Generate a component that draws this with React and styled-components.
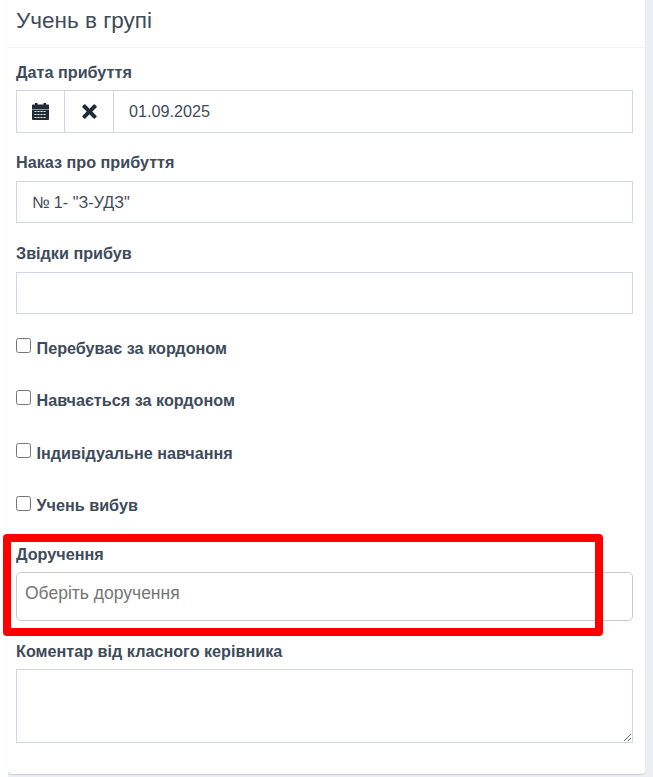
import React from "react";
import styled, { createGlobalStyle } from "styled-components";

const Global = createGlobalStyle`
  html, body { margin: 0; padding: 0; background: #fff; }
  body { font-family: "Liberation Sans", Arial, sans-serif; color: #3e4b5b; overflow: hidden; }
  * { box-sizing: border-box; }
`;

const Page = styled.div`
  position: relative;
  width: 653px;
  height: 777px;
  padding-left: 8px;
  overflow: hidden;
`;

const Shell = styled.div`
  height: 777px;
  background: #ebeff4;
  padding: 0 8px 3px 0;
`;

const Card = styled.section`
  height: 774px;
  background: #fff;
  border-radius: 0 0 4px 4px;
  box-shadow: 0 1px 1px rgba(60, 70, 90, 0.2);
`;

const CardHeader = styled.header`
  height: 48px;
  padding: 8px 8px 0;
  border-bottom: 1px solid #f2f3f5;
`;

const Title = styled.h2`
  margin: 0;
  font-size: 22.5px;
  line-height: 26px;
  font-weight: 400;
  color: #3e4b5b;
`;

const Body = styled.div`
  padding: 16px 12px 0 8px;
  display: flex;
  flex-direction: column;
`;

const Field = styled.div`
  margin-bottom: ${(p) => p.$mb ?? 22}px;
`;

const Label = styled.label`
  display: block;
  height: 26px;
  font-size: 16.2px;
  line-height: ${(p) => (p.$raised ? 14 : 16)}px;
  font-weight: 700;
  color: #3e4b5b;
`;

const InputGroup = styled.div`
  display: flex;
  height: 43px;
  border: 1px solid #d2d6e2;
`;

const Addon = styled.span`
  flex: none;
  width: ${(p) => p.$w}px;
  display: flex;
  align-items: center;
  justify-content: center;
  border-right: 1px solid #d2d6e2;
`;

const GroupInput = styled.input`
  flex: 1;
  min-width: 0;
  border: 0;
  outline: 0;
  padding: 0 15px;
  font: 400 16.2px "Liberation Sans", Arial, sans-serif;
  color: #3e4b5b;
  background: #fff;
`;

const TextInput = styled.input`
  display: block;
  width: 100%;
  height: 42px;
  border: 1px solid #d2d6e2;
  outline: 0;
  padding: 0 15px;
  font: 400 16.2px "Liberation Sans", Arial, sans-serif;
  color: #3e4b5b;
  background: #fff;
`;

const CheckRow = styled.label`
  display: flex;
  align-items: flex-start;
  height: ${(p) => p.$h}px;
  font-size: 16.2px;
  line-height: ${(p) => p.$lh}px;
  font-weight: 700;
  color: #3e4b5b;
`;

const Check = styled.input`
  flex: none;
  width: 15px;
  height: 15px;
  margin: 0 5.5px 0 0;
`;

const SelectBox = styled.input`
  display: block;
  width: 100%;
  height: 49px;
  border: 1px solid #cccccc;
  border-radius: 5px;
  outline: 0;
  padding: 0 8px 7px;
  font: 400 17.5px "Liberation Sans", Arial, sans-serif;
  background: #fff;
  &::placeholder { color: #757575; opacity: 1; }
`;

const Area = styled.textarea`
  display: block;
  width: 100%;
  height: 74px;
  border: 1px solid #d2d6e2;
  outline: 0;
  padding: 8px 15px;
  font: 400 16px "Liberation Sans", Arial, sans-serif;
  background: #fff;
`;

const Highlight = styled.div`
  position: absolute;
  left: 3px;
  top: 534px;
  width: 600px;
  height: 102px;
  border: 8px solid #ff0000;
  border-radius: 4px;
  pointer-events: none;
`;

const CalendarIcon = () => (
  <svg width="17" height="17" viewBox="0 0 17 17" fill="#212b36">
    <rect x="3" y="0" width="2.5" height="3" />
    <rect x="11.5" y="0" width="2.5" height="3" />
    <path d="M1 1.5h15a1 1 0 0 1 1 1V6H0V2.5a1 1 0 0 1 1-1z" />
    <path
      fillRule="evenodd"
      d="M0 6.5h17V16a1 1 0 0 1-1 1H1a1 1 0 0 1-1-1zM2.5 8v1h2V8zm3 0v1h2V8zm3 0v1h2V8zm3 0v1h2V8zM2.5 11v1h2v-1zm3 0v1h2v-1zm3 0v1h2v-1zm3 0v1h2v-1zM2.5 14v1h2v-1zm3 0v1h2v-1zm3 0v1h2v-1zm3 0v1h2v-1z"
    />
  </svg>
);

const CrossIcon = () => (
  <svg width="15" height="15" viewBox="0 0 16 16" fill="#212b36">
    <path d="M3.6.6 8 5l4.4-4.4a1 1 0 0 1 1.4 0l1.6 1.6a1 1 0 0 1 0 1.4L11 8l4.4 4.4a1 1 0 0 1 0 1.4l-1.6 1.6a1 1 0 0 1-1.4 0L8 11l-4.4 4.4a1 1 0 0 1-1.4 0L.6 13.8a1 1 0 0 1 0-1.4L5 8 .6 3.6a1 1 0 0 1 0-1.4L2.2.6a1 1 0 0 1 1.4 0z" />
  </svg>
);

const checks = [
  ["Перебуває за кордоном", 52, 20],
  ["Навчається за кордоном", 53, 20],
  ["Індивідуальне навчання", 53, 20],
  ["Учень вибув", 0, 18],
];

export default function App() {
  return (
    <Page>
      <Global />
      <Shell>
        <Card>
          <CardHeader>
            <Title>Учень в групі</Title>
          </CardHeader>
          <Body>
            <Field>
              <Label>Дата прибуття</Label>
              <InputGroup>
                <Addon $w={48}><CalendarIcon /></Addon>
                <Addon $w={49}><CrossIcon /></Addon>
                <GroupInput readOnly value="01.09.2025" />
              </InputGroup>
            </Field>
            <Field $mb={23}>
              <Label $raised>Наказ про прибуття</Label>
              <TextInput readOnly value={'№ 1- "З-УДЗ"'} />
            </Field>
            <Field $mb={24}>
              <Label $raised>Звідки прибув</Label>
              <TextInput readOnly value="" />
            </Field>
            <Field $mb={50}>
              {checks.map(([text, h, lh]) => (
                <CheckRow key={text} $h={h} $lh={lh}>
                  <Check type="checkbox" />
                  {text}
                </CheckRow>
              ))}
            </Field>
            <Field>
              <Label>Доручення</Label>
              <SelectBox readOnly placeholder="Оберіть доручення" />
            </Field>
            <Field>
              <Label>Коментар від класного керівника</Label>
              <Area readOnly />
            </Field>
          </Body>
        </Card>
      </Shell>
      <Highlight />
    </Page>
  );
}
